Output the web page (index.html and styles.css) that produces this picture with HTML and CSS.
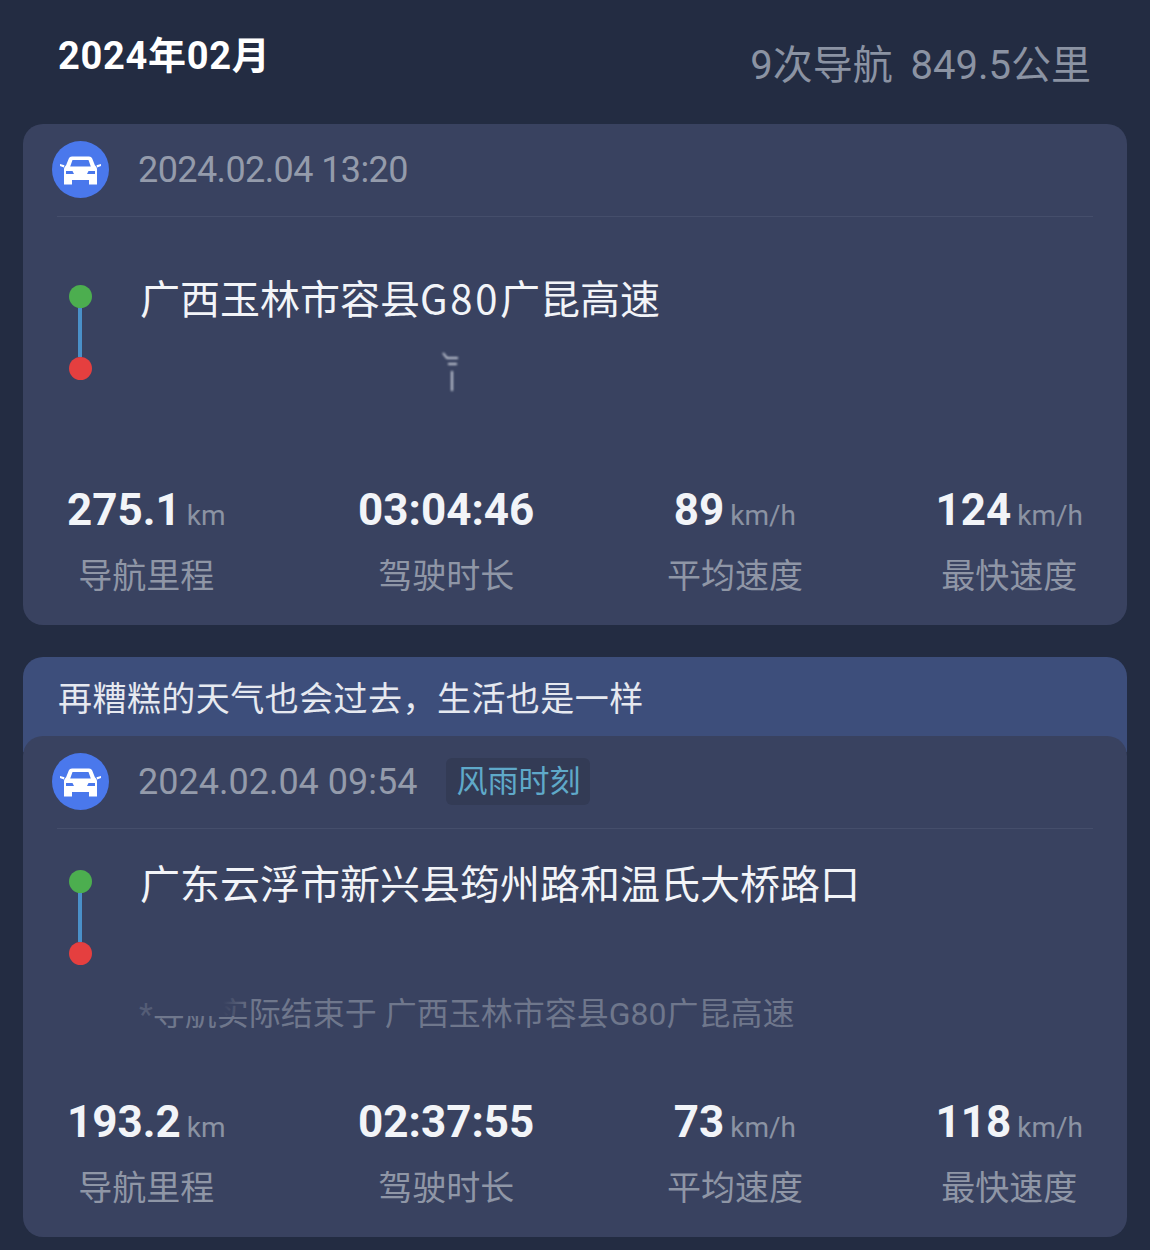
FILE: index.html
```html
<!DOCTYPE html>
<html lang="zh-CN">
<head>
    <meta charset="UTF-8">
    <meta name="viewport" content="width=device-width, initial-scale=1.0">
    <title>导航记录</title>
    <link rel="stylesheet" href="styles.css">
</head>
<body>
    <svg class="defs" width="0" height="0">
        <symbol id="car" viewBox="0 0 57 57">
            <circle cx="28.5" cy="28.5" r="28.5" fill="#4a78ec"/>
            <path fill="#fff" fill-rule="evenodd" d="M20 15.500h17c1.600 0 2.600.7 3.200 2l2.700 6.800c1.400 1.100 2.100 2.600 2.100 4.200v15h-8V39H20v4.500h-8v-15c0-1.600.7-3.100 2.100-4.200l2.700-6.800c.6-1.300 1.600-2 3.200-2zM20.500 19l-2.300 6.500h20.600L36.500 19zM14 30v3h8l-1.500-3zM43 30h-6.500L35 33h8z"/>
            <path fill="#fff" d="M8 23l4.500 1.200-.6 2.300-3.900-1.500zM49 23l-4.500 1.200.6 2.300 3.900-1.500z"/>
        </symbol>
    </svg>

    <div class="page">
        <div class="month-bar">
            <div class="month">2024年02月</div>
            <div class="summary">9次导航&nbsp;&nbsp;849.5公里</div>
        </div>

        <!-- 第一条记录 -->
        <div class="card">
            <div class="card-head">
                <svg class="car-icon"><use href="#car"/></svg>
                <span class="date date-narrow">2024.02.04 13:20</span>
            </div>
            <div class="route route-tall">
                <div class="track"><i class="dot dot-start"></i><i class="line"></i><i class="dot dot-end"></i></div>
                <div class="place">广西玉林市容县<span class="road-code">G80</span>广昆高速</div>
            </div>
            <svg class="smudge" width="30" height="44" viewBox="0 0 30 44">
                <path d="M6 4l4 5h11M11 15h9M15 22v20" fill="none" stroke="#c3c8d4" stroke-width="2"/>
            </svg>
            <div class="stats">
                <div class="stat"><div class="value">275.1<span class="unit">km</span></div><div class="label">导航里程</div></div>
                <div class="stat"><div class="value">03:04:46</div><div class="label">驾驶时长</div></div>
                <div class="stat"><div class="value">89<span class="unit">km/h</span></div><div class="label">平均速度</div></div>
                <div class="stat"><div class="value">124<span class="unit">km/h</span></div><div class="label">最快速度</div></div>
            </div>
        </div>

        <div class="tip">再糟糕的天气也会过去，生活也是一样</div>

        <!-- 第二条记录 -->
        <div class="card card-tipped">
            <div class="card-head">
                <svg class="car-icon"><use href="#car"/></svg>
                <span class="date">2024.02.04 09:54</span>
                <span class="tag">风雨时刻</span>
            </div>
            <div class="route">
                <div class="track"><i class="dot dot-start"></i><i class="line"></i><i class="dot dot-end"></i></div>
                <div class="place">广东云浮市新兴县筠州路和温氏大桥路口</div>
            </div>
            <div class="note">*导航实际结束于 广西玉林市容县G80广昆高速<span class="note-fade"></span></div>
            <div class="stats">
                <div class="stat"><div class="value">193.2<span class="unit">km</span></div><div class="label">导航里程</div></div>
                <div class="stat"><div class="value">02:37:55</div><div class="label">驾驶时长</div></div>
                <div class="stat"><div class="value">73<span class="unit">km/h</span></div><div class="label">平均速度</div></div>
                <div class="stat"><div class="value">118<span class="unit">km/h</span></div><div class="label">最快速度</div></div>
            </div>
        </div>
    </div>
</body>
</html>
```
FILE: styles.css
```css
html, body {
    margin: 0;
    height: 1250px;
    overflow: hidden;
}

body {
    font-family: Roboto, "Noto Sans CJK SC", sans-serif;
    background-color: #232c42;
}

.defs {
    position: absolute;
}

.page {
    padding: 0 23px;
}

.month-bar {
    display: flex;
    justify-content: space-between;
    height: 124px;
    padding: 0 36px 0 35px;
}

.month {
    margin-top: 31px;
    font-size: 38px;
    line-height: 50px;
    font-weight: 700;
    letter-spacing: .7px;
    color: #fff;
}

.summary {
    margin-top: 38px;
    font-size: 40px;
    line-height: 56px;
    word-spacing: -1px;
    color: #8b93a3;
}

.card {
    position: relative;
    display: flex;
    flex-direction: column;
    box-sizing: border-box;
    height: 501px;
    background-color: #394260;
    border-radius: 20px;
}

.card-tipped {
    margin-top: -16px;
}

.card-head {
    display: flex;
    align-items: center;
    height: 92px;
    margin: 0 34px;
    border-bottom: 1px solid #454e6b;
}

.car-icon {
    flex: none;
    width: 57px;
    height: 57px;
    margin: -1px 29px 0 -5px;
}

.date {
    font-size: 36px;
    color: #949bab;
}

.date-narrow {
    letter-spacing: -.6px;
}

.tag {
    margin: -1px 0 0 29px;
    padding: 0 10px;
    height: 47px;
    line-height: 47px;
    font-size: 31px;
    color: #5fa9c9;
    background-color: #333b55;
    border-radius: 6px;
}

.route {
    display: flex;
    align-items: flex-start;
    margin: 41px 0 0 45px;
}

.route-tall {
    margin-top: 68px;
}

.track {
    display: flex;
    flex-direction: column;
    align-items: center;
    width: 24px;
}

.dot {
    flex: none;
    width: 23px;
    height: 23px;
    border-radius: 50%;
}

.dot-start {
    background-color: #4cae4f;
}

.dot-end {
    background-color: #e53f3f;
}

.line {
    width: 4px;
    height: 49px;
    background-color: #4a90c8;
}

.place {
    margin: -16px 0 0 48px;
    font-family: "Noto Sans CJK SC", sans-serif;
    font-size: 40px;
    line-height: 56px;
    color: #f2f4f8;
    white-space: nowrap;
}

.road-code {
    letter-spacing: 2.7px;
}

.smudge {
    position: absolute;
    left: 414px;
    top: 225px;
    filter: blur(1px);
}

.note {
    position: relative;
    align-self: flex-start;
    margin: 27px 0 0 116px;
    font-size: 32px;
    line-height: 44px;
    color: #6f778c;
    white-space: nowrap;
}

/* 遮住开头几个字的上半部分 */
.note-fade {
    position: absolute;
    left: 0;
    top: 4px;
    width: 114px;
    height: 20px;
    background: linear-gradient(90deg, rgba(57, 66, 96, .5) 12%, #394260 12%, #394260 74%, rgba(57, 66, 96, 0));
}

.stats {
    display: flex;
    justify-content: space-between;
    margin-top: auto;
    padding: 0 44px 25px;
}

.stat {
    text-align: center;
    white-space: nowrap;
}

.value {
    height: 50px;
    font-size: 44px;
    line-height: 44px;
    font-weight: 700;
    color: #f2f4f8;
}

.unit {
    margin-left: 6px;
    font-size: 28px;
    font-weight: 400;
    color: #8b93a3;
}

.label {
    margin-top: 14px;
    font-size: 34px;
    line-height: 48px;
    color: #8f96a6;
}

.tip {
    box-sizing: border-box;
    height: 95px;
    margin-top: 32px;
    padding: 19px 35px 0;
    font-size: 34px;
    line-height: 46px;
    letter-spacing: .45px;
    color: #e6e9f0;
    background-color: #3d4e7b;
    border-radius: 20px 20px 0 0;
}
```
